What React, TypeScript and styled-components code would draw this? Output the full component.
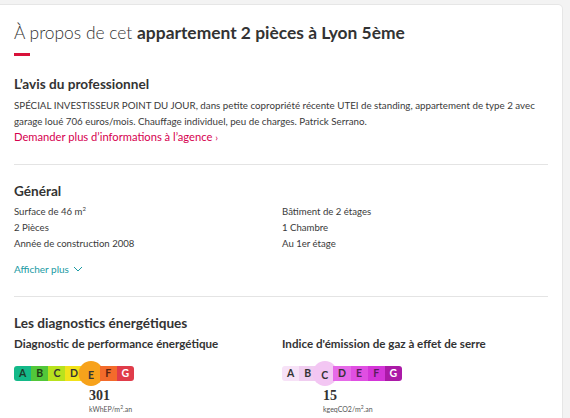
import React, { FC } from "react";
import styled, { createGlobalStyle } from "styled-components";

const GlobalStyle = createGlobalStyle`
  html, body {
    margin: 0;
    padding: 0;
    background: #f3f3f3;
    font-family: Lato, "Open Sans", sans-serif;
    color: #333;
  }
`;

interface Grade {
  letter: string;
  bg: string;
  fg: string;
}

const dpeGrades: Grade[] = [
  { letter: "A", bg: "#14b989", fg: "#1d3b2c" },
  { letter: "B", bg: "#52c73a", fg: "#1f3a14" },
  { letter: "C", bg: "#b8e21e", fg: "#333" },
  { letter: "D", bg: "#f2e21a", fg: "#333" },
  { letter: "E", bg: "#f6a017", fg: "#333" },
  { letter: "F", bg: "#f36b2b", fg: "#5a2210" },
  { letter: "G", bg: "#e03c4a", fg: "#fff" },
];

const gesGrades: Grade[] = [
  { letter: "A", bg: "#f7e2f7", fg: "#333" },
  { letter: "B", bg: "#f0cdf0", fg: "#333" },
  { letter: "C", bg: "#eeb2ee", fg: "#333" },
  { letter: "D", bg: "#e66ae8", fg: "#333" },
  { letter: "E", bg: "#e04fe2", fg: "#5a1d5c" },
  { letter: "F", bg: "#d435d8", fg: "#5a1d5c" },
  { letter: "G", bg: "#ab1aa7", fg: "#fff" },
];

const EnergyScale: FC<{
  grades: Grade[];
  active: string;
  activeBg: string;
  value: string;
  unit: string;
}> = ({ grades, active, activeBg, value, unit }) => {
  const idx = grades.findIndex((g) => g.letter === active);
  const [before, after] = unit.split("²");
  return (
    <ScaleWrap>
      <Bar>
        {grades.map((g) => (
          <Segment key={g.letter} $bg={g.bg} $fg={g.fg}>
            {g.letter === active ? (
              <ActiveDot $bg={activeBg}>{g.letter}</ActiveDot>
            ) : (
              g.letter
            )}
          </Segment>
        ))}
      </Bar>
      <ValueBlock style={{ marginLeft: idx * 17 + 7 }}>
        <Value>{value}</Value>
        <Unit>
          {before}
          <sup>2</sup>
          {after}
        </Unit>
      </ValueBlock>
    </ScaleWrap>
  );
};

const App: FC = () => (
  <>
    <GlobalStyle />
    <Page>
      <Card>
        <Title>
          À propos de cet <strong>appartement 2 pièces à Lyon 5ème</strong>
        </Title>
        <Accent />

        <Section>
          <SectionTitle>L’avis du professionnel</SectionTitle>
          <Body>
            SPÉCIAL INVESTISSEUR POINT DU JOUR, dans petite copropriété récente
            UTEI de standing, appartement de type 2 avec garage loué 706
            euros/mois. Chauffage individuel, peu de charges. Patrick Serrano.
          </Body>
          <RedLink>
            Demander plus d’informations à l’agence <Chevron>›</Chevron>
          </RedLink>
        </Section>

        <Divider />

        <Section>
          <SectionTitle>Général</SectionTitle>
          <Grid>
            <Item>
              Surface de 46 m<sup>2</sup>
            </Item>
            <Item>Bâtiment de 2 étages</Item>
            <Item>2 Pièces</Item>
            <Item>1 Chambre</Item>
            <Item>Année de construction 2008</Item>
            <Item>Au 1er étage</Item>
          </Grid>
          <MoreLink>
            Afficher plus
            <svg width="10" height="6" viewBox="0 0 10 6" fill="none">
              <path d="M1 1l4 4 4-4" stroke="#1a9aa3" strokeWidth="1" />
            </svg>
          </MoreLink>
        </Section>

        <Divider />

        <Section>
          <SectionTitle>Les diagnostics énergétiques</SectionTitle>
          <DiagRow>
            <DiagCol>
              <SubTitle>Diagnostic de performance énergétique</SubTitle>
              <EnergyScale
                grades={dpeGrades}
                active="E"
                activeBg="#f7a21b"
                value="301"
                unit="kWhEP/m².an"
              />
            </DiagCol>
            <DiagCol>
              <SubTitle>Indice d'émission de gaz à effet de serre</SubTitle>
              <EnergyScale
                grades={gesGrades}
                active="C"
                activeBg="#f3c6f3"
                value="15"
                unit="kgeqCO2/m².an"
              />
            </DiagCol>
          </DiagRow>
        </Section>
      </Card>
    </Page>
  </>
);

export default App;

const Page = styled.div`
  padding: 4px 7px 0 0;
  height: 414px;
  overflow: hidden;
`;

const Card = styled.div`
  background: #fff;
  border: 1px solid #e6e6e6;
  border-left: none;
  border-radius: 0 5px 0 0;
  padding: 16px 14px 0 14px;
  min-height: 420px;
`;

const Title = styled.h1`
  margin: 0;
  font-size: 17.4px;
  font-weight: 300;
  color: #333;
  line-height: 24px;

  strong {
    font-weight: 700;
  }
`;

const Accent = styled.div`
  width: 16px;
  height: 3px;
  background: #d8113a;
  margin-top: 8px;
  margin-bottom: 18px;
`;

const Section = styled.div`
  display: flex;
  flex-direction: column;
`;

const SectionTitle = styled.h2`
  margin: 0 0 3px;
  font-size: 13.6px;
  font-weight: 700;
  color: #333;
  line-height: 20px;
`;

const Body = styled.p`
  margin: 0;
  font-size: 9.75px;
  line-height: 16px;
  color: #3a3a3a;
`;

const RedLink = styled.a`
  font-size: 11.2px;
  line-height: 16px;
  color: #d6004f;
  cursor: pointer;
`;

const Chevron = styled.span`
  font-size: 10px;
`;

const Divider = styled.hr`
  border: none;
  border-top: 1px solid #e4e4e4;
  margin: 19px 0 16px;
  width: 534px;
`;

const Grid = styled.div`
  display: grid;
  grid-template-columns: 268px 1fr;
  font-size: 9.6px;
  line-height: 16px;
  color: #3a3a3a;
`;

const Item = styled.div`
  sup {
    font-size: 6px;
    line-height: 0;
  }
`;

const MoreLink = styled.a`
  display: flex;
  align-items: center;
  gap: 4px;
  margin-top: 9px;
  font-size: 10px;
  line-height: 16px;
  color: #1a9aa3;
  cursor: pointer;
`;

const DiagRow = styled.div`
  display: grid;
  grid-template-columns: 268px 1fr;
`;

const DiagCol = styled.div`
  display: flex;
  flex-direction: column;
`;

const SubTitle = styled.h3`
  margin: 0 0 14px;
  font-size: 11.6px;
  font-weight: 700;
  color: #333;
  line-height: 16px;
`;

const ScaleWrap = styled.div`
  display: flex;
  flex-direction: column;
`;

const Bar = styled.div`
  display: flex;
  width: 120px;
  height: 15px;

  & > div:first-child {
    border-radius: 3px 0 0 3px;
  }
  & > div:last-child {
    border-radius: 0 3px 3px 0;
  }
`;

const Segment = styled.div<{ $bg: string; $fg: string }>`
  position: relative;
  flex: 1;
  display: flex;
  align-items: center;
  justify-content: center;
  background: ${(p) => p.$bg};
  color: ${(p) => p.$fg};
  font-size: 10.5px;
  font-weight: 700;
  line-height: 15px;
`;

const ActiveDot = styled.div<{ $bg: string }>`
  position: absolute;
  left: 50%;
  top: -5px;
  transform: translateX(-50%);
  width: 25px;
  height: 25px;
  border-radius: 50%;
  background: ${(p) => p.$bg};
  display: flex;
  align-items: center;
  justify-content: center;
  padding-top: 3px;
  box-sizing: border-box;
`;

const ValueBlock = styled.div`
  display: flex;
  flex-direction: column;
  margin-top: 8px;
`;

const Value = styled.div`
  font-family: "Liberation Serif", serif;
  font-weight: 700;
  font-size: 14px;
  line-height: 14px;
  color: #333;
`;

const Unit = styled.div`
  font-size: 7px;
  line-height: 12px;
  color: #555;

  sup {
    font-size: 5px;
    line-height: 0;
  }
`;
